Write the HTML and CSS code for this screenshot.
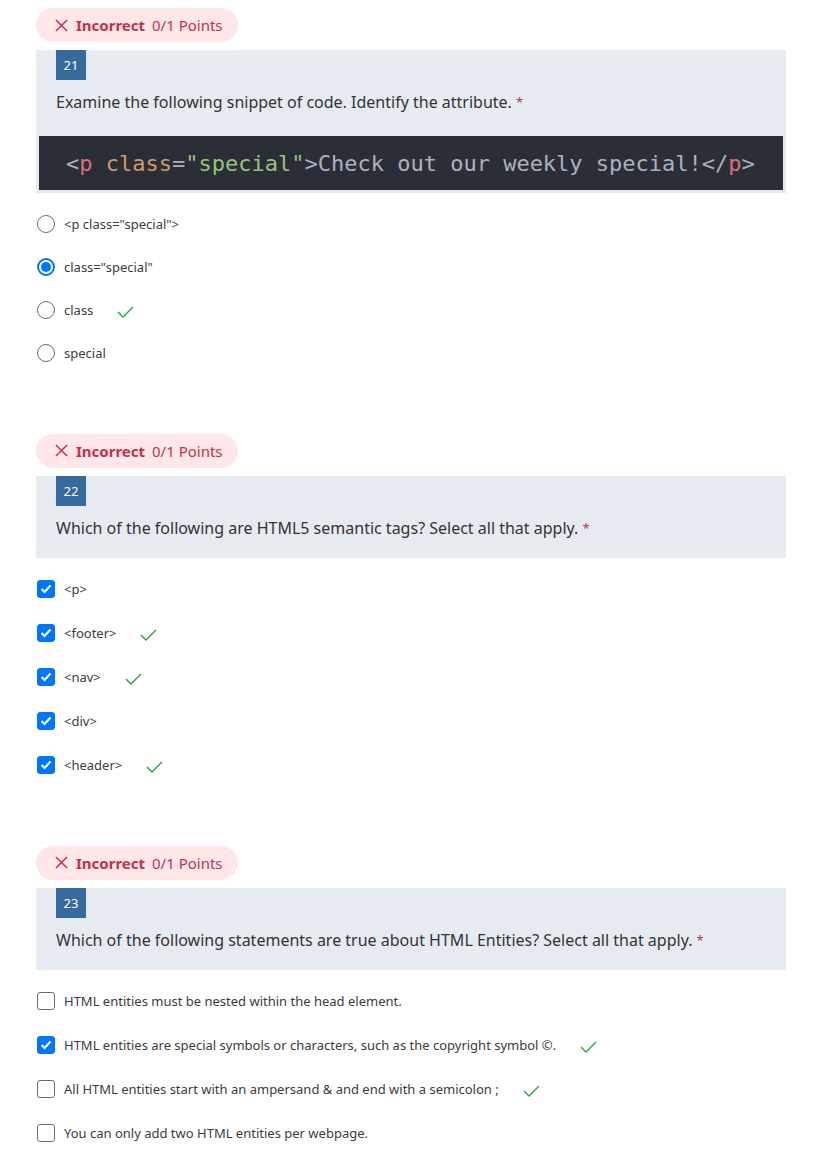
FILE: index.html
```html
<!DOCTYPE html>
<html>
<head>
<meta charset="utf-8">
<link rel="stylesheet" href="styles.css">
</head>
<body>
<div class="quiz">

  <section class="question">
    <div class="badge">
      <svg class="x-icon" viewBox="0 0 14 14" width="13" height="13"><path d="M1 1 L13 13 M13 1 L1 13" stroke="#c4314b" stroke-width="1.6" fill="none"/></svg>
      <span class="badge-label">Incorrect</span>
      <span class="badge-points">0/1 Points</span>
    </div>
    <div class="qbox">
      <div class="qnum">21</div>
      <div class="qtext">Examine the following snippet of code. Identify the attribute. <span class="req">*</span></div>
      <div class="code"><code class="code-line"><span class="c-p">&lt;</span><span class="c-tag">p</span> <span class="c-attr">class</span><span class="c-p">=</span><span class="c-str">"special"</span><span class="c-p">&gt;</span>Check out our weekly special!<span class="c-p">&lt;/</span><span class="c-tag">p</span><span class="c-p">&gt;</span></code></div>
    </div>
    <ul class="options options-radio">
      <li class="opt"><span class="radio"></span><span class="label">&lt;p class="special"&gt;</span></li>
      <li class="opt"><span class="radio checked"></span><span class="label">class="special"</span></li>
      <li class="opt"><span class="radio"></span><span class="label">class</span><svg class="ok" viewBox="0 0 17 12" width="17" height="12"><path d="M1 6 L6 11 L16 1" stroke="#2ea043" stroke-width="1.4" fill="none"/></svg></li>
      <li class="opt"><span class="radio"></span><span class="label">special</span></li>
    </ul>
  </section>

  <section class="question">
    <div class="badge">
      <svg class="x-icon" viewBox="0 0 14 14" width="13" height="13"><path d="M1 1 L13 13 M13 1 L1 13" stroke="#c4314b" stroke-width="1.6" fill="none"/></svg>
      <span class="badge-label">Incorrect</span>
      <span class="badge-points">0/1 Points</span>
    </div>
    <div class="qbox">
      <div class="qnum">22</div>
      <div class="qtext">Which of the following are HTML5 semantic tags? Select all that apply. <span class="req">*</span></div>
    </div>
    <ul class="options">
      <li class="opt"><span class="box checked"><svg viewBox="0 0 12 10" width="12" height="10"><path d="M1.5 5 L4.5 8 L10.5 1.5" stroke="#fff" stroke-width="2.2" fill="none"/></svg></span><span class="label">&lt;p&gt;</span></li>
      <li class="opt"><span class="box checked"><svg viewBox="0 0 12 10" width="12" height="10"><path d="M1.5 5 L4.5 8 L10.5 1.5" stroke="#fff" stroke-width="2.2" fill="none"/></svg></span><span class="label">&lt;footer&gt;</span><svg class="ok" viewBox="0 0 17 12" width="17" height="12"><path d="M1 6 L6 11 L16 1" stroke="#2ea043" stroke-width="1.4" fill="none"/></svg></li>
      <li class="opt"><span class="box checked"><svg viewBox="0 0 12 10" width="12" height="10"><path d="M1.5 5 L4.5 8 L10.5 1.5" stroke="#fff" stroke-width="2.2" fill="none"/></svg></span><span class="label">&lt;nav&gt;</span><svg class="ok" viewBox="0 0 17 12" width="17" height="12"><path d="M1 6 L6 11 L16 1" stroke="#2ea043" stroke-width="1.4" fill="none"/></svg></li>
      <li class="opt"><span class="box checked"><svg viewBox="0 0 12 10" width="12" height="10"><path d="M1.5 5 L4.5 8 L10.5 1.5" stroke="#fff" stroke-width="2.2" fill="none"/></svg></span><span class="label">&lt;div&gt;</span></li>
      <li class="opt"><span class="box checked"><svg viewBox="0 0 12 10" width="12" height="10"><path d="M1.5 5 L4.5 8 L10.5 1.5" stroke="#fff" stroke-width="2.2" fill="none"/></svg></span><span class="label">&lt;header&gt;</span><svg class="ok" viewBox="0 0 17 12" width="17" height="12"><path d="M1 6 L6 11 L16 1" stroke="#2ea043" stroke-width="1.4" fill="none"/></svg></li>
    </ul>
  </section>

  <section class="question">
    <div class="badge">
      <svg class="x-icon" viewBox="0 0 14 14" width="13" height="13"><path d="M1 1 L13 13 M13 1 L1 13" stroke="#c4314b" stroke-width="1.6" fill="none"/></svg>
      <span class="badge-label">Incorrect</span>
      <span class="badge-points">0/1 Points</span>
    </div>
    <div class="qbox">
      <div class="qnum">23</div>
      <div class="qtext">Which of the following statements are true about HTML Entities? Select all that apply. <span class="req">*</span></div>
    </div>
    <ul class="options">
      <li class="opt"><span class="box"></span><span class="label">HTML entities must be nested within the head element.</span></li>
      <li class="opt"><span class="box checked"><svg viewBox="0 0 12 10" width="12" height="10"><path d="M1.5 5 L4.5 8 L10.5 1.5" stroke="#fff" stroke-width="2.2" fill="none"/></svg></span><span class="label">HTML entities are special symbols or characters, such as the copyright symbol ©.</span><svg class="ok" viewBox="0 0 17 12" width="17" height="12"><path d="M1 6 L6 11 L16 1" stroke="#2ea043" stroke-width="1.4" fill="none"/></svg></li>
      <li class="opt"><span class="box"></span><span class="label">All HTML entities start with an ampersand &amp; and end with a semicolon ;</span><svg class="ok" viewBox="0 0 17 12" width="17" height="12"><path d="M1 6 L6 11 L16 1" stroke="#2ea043" stroke-width="1.4" fill="none"/></svg></li>
      <li class="opt"><span class="box"></span><span class="label">You can only add two HTML entities per webpage.</span></li>
    </ul>
  </section>

</div>
</body>
</html>
```
FILE: styles.css
```css
* { box-sizing: border-box; }
body {
  margin: 0;
  background: #fff;
  font-family: "Noto Sans", "Open Sans", sans-serif;
  color: #333;
}
.quiz {
  width: 750px;
  margin-left: 36px;
  padding-top: 8px;
}
.question {
  margin-bottom: 59px;
}
.badge {
  display: inline-flex;
  align-items: center;
  height: 34px;
  width: 202px;
  padding-left: 19px;
  border-radius: 17px;
  background: #fde7e9;
  color: #c4314b;
  font-size: 15px;
  margin-bottom: 8px;
}
.x-icon { margin-right: 8px; flex: none; }
.badge-label { font-weight: 700; margin-right: 7px; }
.qbox {
  background: #e6ebf2;
  padding: 0 3px 3px;
}
.qnum {
  margin-left: 17px;
  width: 30px;
  height: 30px;
  background: #366a9c;
  color: #fff;
  font-size: 13px;
  display: flex;
  align-items: center;
  justify-content: center;
}
.qtext {
  font-size: 16px;
  line-height: 20px;
  padding: 12px 0 17px 17px;
  color: #333;
}
.req { color: #c4314b; font-size: 13px; vertical-align: top; }
.code {
  background: #2a2e36;
  color: #abb2bf;
  height: 54px;
  display: flex;
  align-items: center;
  padding-left: 27px;
  margin-top: 7px;
}
.code-line {
  font-family: "DejaVu Sans Mono", "Liberation Mono", monospace;
  font-size: 22px;
  white-space: pre;
}
.c-tag { color: #e06c75; }
.c-attr { color: #d19a66; }
.c-str { color: #98c379; }
.c-p { color: #abb2bf; }
.options {
  list-style: none;
  margin: 0;
  padding: 9px 0 0 1px;
}
.opt {
  display: flex;
  align-items: center;
  height: 44px;
  font-size: 13px;
  color: #3b3b3b;
}
.options-radio { padding-top: 9.5px; }
.options-radio .opt { height: 43px; }
.opt .ok { margin-left: 24px; margin-top: 4px; }
.radio {
  width: 18px;
  height: 18px;
  border: 1px solid #6b6b6b;
  border-radius: 50%;
  margin-right: 9px;
  flex: none;
  display: flex;
  align-items: center;
  justify-content: center;
}
.radio.checked { border: 2px solid #0075ff; }
.radio.checked::after {
  content: "";
  width: 10px;
  height: 10px;
  border-radius: 50%;
  background: #0075ff;
}
.box {
  width: 18px;
  height: 18px;
  border: 1px solid #6b6b6b;
  border-radius: 3px;
  margin-right: 9px;
  flex: none;
  display: flex;
  align-items: center;
  justify-content: center;
}
.box.checked { background: #0075ff; border-color: #0075ff; }
.label { line-height: 20px; }
```
